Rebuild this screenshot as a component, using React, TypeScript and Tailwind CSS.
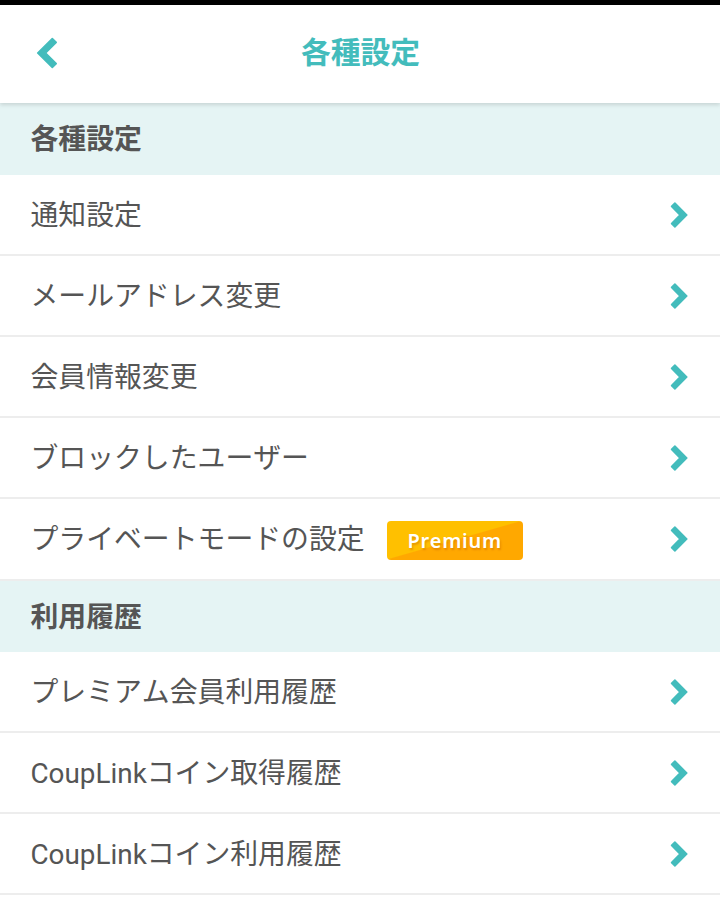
type SettingItem = {
  label: string;
  isPremium?: boolean;
};

type SettingSection = {
  title: string;
  items: SettingItem[];
};

const sections: SettingSection[] = [
  {
    title: "各種設定",
    items: [
      { label: "通知設定" },
      { label: "メールアドレス変更" },
      { label: "会員情報変更" },
      { label: "ブロックしたユーザー" },
      { label: "プライベートモードの設定", isPremium: true },
    ],
  },
  {
    title: "利用履歴",
    items: [
      { label: "プレミアム会員利用履歴" },
      { label: "CoupLinkコイン取得履歴" },
      { label: "CoupLinkコイン利用履歴" },
    ],
  },
];

function ChevronLeft() {
  return (
    <svg aria-hidden="true" className="h-8 w-[22px]" viewBox="0 0 22 32">
      <path
        d="M16.3 1.5 1.7 16l14.6 14.5 3.9-3.9L9.6 16 20.2 5.4z"
        fill="currentColor"
        stroke="currentColor"
        strokeLinejoin="round"
        strokeWidth="1.6"
      />
    </svg>
  );
}

function ChevronRight() {
  return (
    <svg aria-hidden="true" className="h-[26px] w-[18px]" viewBox="0 0 18 26">
      <path
        d="M4.9 1.1 16.8 13 4.9 24.9l-3.3-3.3L9.9 13 1.6 4.4z"
        fill="currentColor"
        stroke="currentColor"
        strokeLinejoin="round"
        strokeWidth="1.6"
      />
    </svg>
  );
}

function PremiumBadge() {
  return (
    <span className="ml-[22px] mt-[3px] flex h-[39px] w-[136px] items-center justify-center rounded bg-[linear-gradient(164deg,#ffc000_48.5%,#ffa800_50%)] pt-px font-['Noto_Sans',sans-serif] text-[20px] font-semibold tracking-[0.7px] text-white [text-shadow:1px_2px_2px_rgba(190,90,0,0.4)]">
      Premium
    </span>
  );
}

function SettingRow({ label, isPremium }: SettingItem) {
  return (
    <li className={`border-b-2 border-[#ededed] ${isPremium ? "h-[82px]" : "h-[81px]"}`}>
      <button className="flex h-full w-full items-center pr-8 pl-[30.5px] text-left" type="button">
        <span className="pt-[2px] text-[27.85px] leading-10 whitespace-nowrap">{label}</span>
        {isPremium && <PremiumBadge />}
        <span className="ml-auto text-[#43bcbc]">
          <ChevronRight />
        </span>
      </button>
    </li>
  );
}

export default function App() {
  return (
    <div className="h-[898px] overflow-hidden border-t-5 border-black bg-white font-[Roboto,'Noto_Sans_CJK_JP',sans-serif] text-[#555] [font-kerning:none]">
      <header className="relative grid h-[98px] grid-cols-[1fr_auto_1fr] items-center bg-white pb-[3px] text-[#43bcbc] shadow-[0_2px_4px_rgba(0,0,0,0.13)]">
        <button aria-label="戻る" className="ml-9 w-fit" type="button">
          <ChevronLeft />
        </button>
        <h1 className="pl-px text-[29.8px] leading-10 font-bold">各種設定</h1>
      </header>

      <main>
        {sections.map((section) => (
          <section key={section.title} className="group">
            <h2 className="flex h-[71px] items-center bg-[#e5f4f4] pt-[2px] pl-[30.5px] text-[27.85px] leading-10 font-bold group-first:h-18">
              {section.title}
            </h2>
            <ul>
              {section.items.map((item) => (
                <SettingRow key={item.label} {...item} />
              ))}
            </ul>
          </section>
        ))}
      </main>
    </div>
  );
}
